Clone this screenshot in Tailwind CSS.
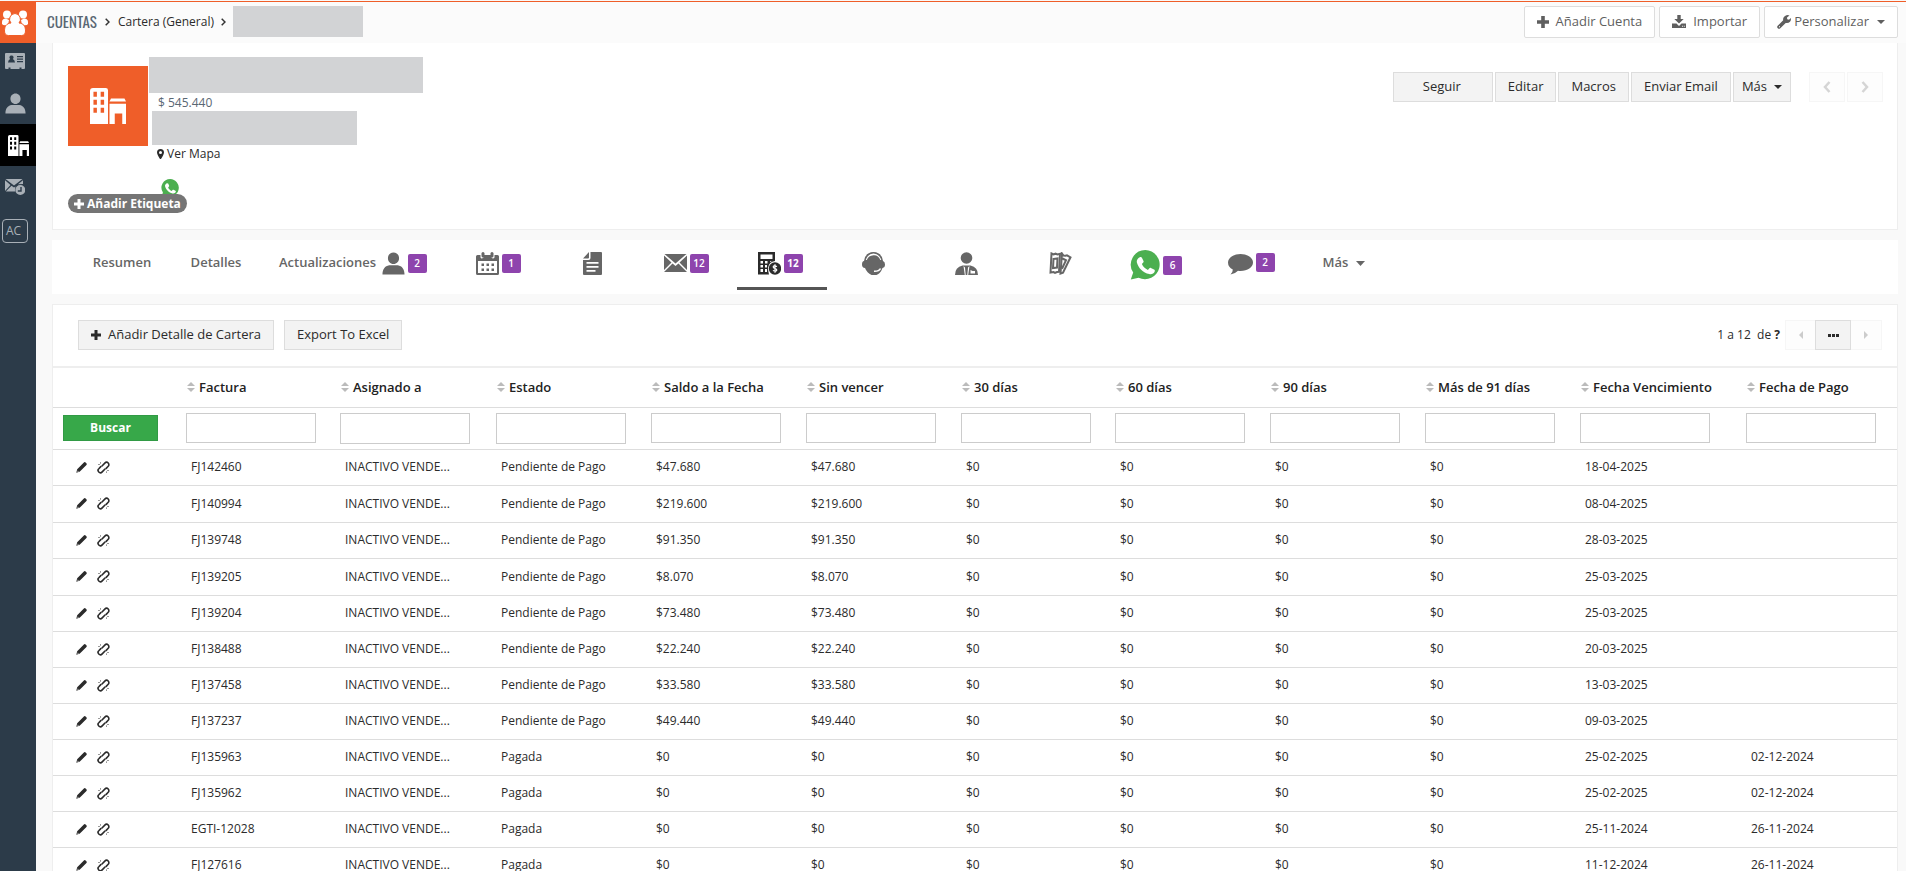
<!DOCTYPE html>
<html lang="es">
<head>
<meta charset="utf-8">
<title>Cuentas - Cartera</title>
<script src="https://cdn.jsdelivr.net/npm/@tailwindcss/browser@4"></script>
</head>
<body class="bg-[#f9f9f9] font-['Open_Sans',sans-serif] text-[13px] text-[#2b2b2b] h-screen overflow-hidden flex flex-col">

<svg class="hidden" aria-hidden="true">
  <symbol id="i-user" viewBox="0 0 24 24"><path d="M12 0.5c3.400 0 5.800 2.600 5.800 6s-2.400 6-5.800 6-5.800-2.600-5.800-6 2.400-6 5.800-6zM0.500 23.500c0-5.500 2.500-9 7-9.700h9c4.500.7 7 4.200 7 9.700z"/></symbol>
  <symbol id="i-building" viewBox="0 0 24 24"><path fill-rule="evenodd" d="M2 0h8.500q1.500 0 1.500 1.500V24H0V2q0-2 2-2zM2.300 2.500v3.300h2.300V2.500zm4.800 0v3.300h2.300V2.500zM2.300 7.800v3.300h2.300V7.800zm4.800 0v3.300h2.300V7.800zM2.300 13.200v3.300h2.300v-3.300zm4.800 0v3.300h2.300v-3.300zM14 7h9l1 2H13zM13 10.500h11V24h-2.500v-7h-5v7H13z"/></symbol>
  <symbol id="i-whatsapp" viewBox="0 0 30 30"><path fill="#4caf50" d="M15.300 0a14.600 14.600 0 1 1-6.700 27.700L.8 29.600l2.400-7A14.600 14.600 0 0 1 15.300 0z"/><path fill="#fff" d="M9.800 7.200c.8-.6 1.700-.3 2.100.5l1.600 3.300c.3.600.1 1.200-.3 1.600l-1.300 1.400c1.200 2.700 3.200 4.700 6 5.900l1.300-1.500c.5-.6 1.100-.7 1.700-.4l3.100 1.500c.8.4 1 1.100.7 1.900-.9 2.200-3.100 3.200-5.500 2.600C13 22.700 8.200 17.900 6.800 12.200c-.5-2 1.300-4.200 3-5z"/></symbol>
  <symbol id="i-plus" viewBox="0 0 12 12"><path d="M4.200 0h3.600v4.200H12v3.600H7.800V12H4.200V7.800H0V4.200h4.200z"/></symbol>
  <symbol id="i-caret" viewBox="0 0 8 4"><path d="M0 0h8L4 4z"/></symbol>
  <symbol id="i-sort" viewBox="0 0 8 10"><path d="M4 0l4 4H0zM0 6h8l-4 4z"/></symbol>
  <symbol id="i-pencil" viewBox="0 0 12 12"><path d="M8.600.5q1-.8 1.900 0l.8.8q.9.9.1 1.900l-5.200 5.300-2.300 2L.3 11.600l1-3.700zM2 9.200l-.4 1.200.4.3 1.100-.4z" fill-rule="evenodd"/></symbol>
  <symbol id="i-unlink" viewBox="0 0 13 13"><g fill="none" stroke="currentColor" stroke-width="1.600" stroke-linecap="round"><path d="M5 5l2.800-2.900c1-1 2.500-1 3.400-.1s.9 2.400 0 3.300L9.200 7.400"/><path d="M8 8l-2.800 2.900c-1 1-2.500 1-3.400.1s-.9-2.400 0-3.300l2-2.100"/></g><path fill="none" stroke="#999" stroke-width="1" d="M1 3.500h2M3.500 1v1.800M10 9.500h2M9.500 10.300v1.700"/></symbol>
</svg>

<div class="h-px shrink-0"></div>
<div class="h-px shrink-0 bg-[#ef5e29]"></div>

<div class="flex flex-1 min-h-0">
  <nav class="w-9 shrink-0 bg-[#2c3b49] text-[#a9b0b7]" aria-label="Módulos">
    <a href="#" aria-label="Inicio" class="flex h-[41px] items-center justify-center bg-[#ef5e29] pr-1.5 text-white">
      <svg class="size-[26px] fill-current" viewBox="0 0 26 26"><circle cx="5" cy="4.500" r="4"/><circle cx="21" cy="4.500" r="4"/><path d="M0 14V12q0-3.500 4-3.500l3 1.500-1 5q-5 1-6-1zM26 14V12q0-3.500-4-3.500L19 10l1 5q5 1 6-1z"/><path stroke="#ef5e29" stroke-width="1" d="M13 3.500a5.700 5.700 0 0 1 4 9.500c4.500.5 6.500 3 6.500 8 0 3-1.500 4.500-4 4.500H6.500c-2.500 0-4-1.500-4-4.500 0-5 2-7.500 6.500-8a5.700 5.700 0 0 1 4-9.500z"/></svg>
    </a>
    <a href="#" aria-label="Contactos" class="flex h-[36px] items-center justify-center pr-1.5">
      <svg class="h-[17px] w-5 fill-current" viewBox="0 0 20 17"><path fill-rule="evenodd" d="M1 0h18q1 0 1 1v14q0 1-1 1h-2.500v-1.500h-2V16h-9v-1.500h-2V16H1q-1 0-1-1V1q0-1 1-1zM6.500 2.500a2 2 0 0 0-1.300 3.600Q3.300 6.700 3 9.500h7Q9.700 6.700 7.800 6.100A2 2 0 0 0 6.500 2.500zM12 3v1.200h6V3zm0 2.500v1.200h6V5.500zM12 8v1.200h6V8z"/></svg>
    </a>
    <a href="#" aria-label="Usuarios" class="flex h-[45px] items-center justify-center pr-1.5 pt-1"><svg class="size-[21px] fill-current"><use href="#i-user"/></svg></a>
    <a href="#" aria-label="Cuentas" class="flex h-[42px] items-center justify-center bg-black text-white"><svg class="size-[21px] fill-current"><use href="#i-building"/></svg></a>
    <a href="#" aria-label="Correos programados" class="flex h-[42px] items-center justify-center pr-1.5">
      <svg class="h-4 w-5 fill-current" viewBox="0 0 20 16"><path d="M.5 0h17L9 6.500zM0 1.200L5.500 6 0 12zM18 1.200V5q-3 0-5 .2zM6.500 6.800L9 8.500l1.500-1Q9.700 10 10 12.500H.8z"/><path fill-rule="evenodd" d="M15.300 6a5 5 0 1 1 0 10 5 5 0 0 1 0-10zm0 2v3.300h-2.500v1.400h3.900V8z"/></svg>
    </a>
    <a href="#" class="mt-[11px] ml-0.5 flex h-6 w-[26px] items-center rounded border border-[#a9b0b7] pl-[3px] text-xs">AC</a>
  </nav>

  <main class="flex min-w-0 flex-1 flex-col">
    <header class="flex h-[41px] shrink-0 items-center bg-[#fbfbfb] pb-0.5 pl-[11px] pr-2">
      <h1 class="font-['Oswald','Liberation_Sans_Narrow',sans-serif] text-[15px] text-[#5a6773]">CUENTAS</h1>
      <svg class="mx-2 h-2 w-[5px]" viewBox="0 0 5 8" fill="none" stroke="#333" stroke-width="1.500"><path d="M.7.7L4 4 .7 7.300"/></svg>
      <a href="#" class="text-xs">Cartera (General)</a>
      <svg class="mx-[7px] h-2 w-[5px]" viewBox="0 0 5 8" fill="none" stroke="#333" stroke-width="1.500"><path d="M.7.7L4 4 .7 7.300"/></svg>
      <div class="h-[31px] w-[130px] bg-[#d2d3d5]"></div>
      <div class="ml-auto flex gap-1 text-[#5f5f5f]">
        <button class="flex h-8 items-center gap-[7px] rounded-xs border border-[#ddd] bg-white px-3"><svg class="size-3 fill-current"><use href="#i-plus"/></svg>Añadir Cuenta</button>
        <button class="flex h-8 items-center gap-[7px] rounded-xs border border-[#ddd] bg-white px-3"><svg class="h-[13px] w-[14px] fill-current" viewBox="0 0 14 13"><path fill-rule="evenodd" d="M5.300 0h3.400v4h3L7 8.600 2.300 4h3zM0 8.500h4.500L7 11l2.500-2.500H14V13H0zm10 2.300v.9h.9v-.9zm1.800 0v.9h.9v-.9z"/></svg>Importar</button>
        <button class="flex h-8 items-center gap-[3px] rounded-xs border border-[#ddd] bg-white px-3"><svg class="size-[14px] fill-current" viewBox="0 0 14 14"><path fill-rule="evenodd" d="M9.500.2q1.500-.4 3 .4L10 2.500l.2 1.700 1.800.6L13.900 3q.4 2-.9 3.700-1.800 1.900-4.300 1.200L3.300 13.300Q2 14.400.8 13.200T.7 10.700L6.200 5.300Q5.500 1.800 9.500.2zM2 11.300v1h1v-1z"/></svg>Personalizar<svg class="ml-[5px] h-1 w-2 fill-current"><use href="#i-caret"/></svg></button>
      </div>
    </header>

    <section class="mr-2 ml-4 flex h-[187px] shrink-0 border border-t-0 border-[#eee] bg-white">
      <div class="relative pl-[15px] pt-[14px]">
        <div class="flex">
          <div class="mt-[9px] flex size-20 items-center justify-center bg-[#ef5e29]"><svg class="size-9 fill-white"><use href="#i-building"/></svg></div>
          <div class="pl-px">
            <div class="h-9 w-[274px] bg-[#d2d3d5]"></div>
            <p class="pl-[9px] pt-0.5 text-xs leading-4 text-[#5a6773]">$ 545.440</p>
            <div class="ml-[3px] h-[34px] w-[205px] bg-[#d2d3d5]"></div>
            <a href="#" class="flex items-center gap-[3px] pl-2 text-xs leading-[18px]"><svg class="h-2.5 w-[7px] fill-current" viewBox="0 0 7 10"><path fill-rule="evenodd" d="M3.500 0Q7 .2 7 3.500 6.800 5.500 4 10H3Q.2 5.500 0 3.500 0 .2 3.500 0zm0 2a1.500 1.500 0 1 0 0 3 1.500 1.500 0 0 0 0-3z"/></svg>Ver Mapa</a>
            <svg class="ml-3 mt-4 size-[18px]" viewBox="0 0 30 30"><use href="#i-whatsapp"/></svg>
          </div>
        </div>
        <button class="absolute left-[15px] top-[151px] flex h-[19px] items-center gap-[3px] rounded-full bg-[#757575] px-1.5 text-xs font-bold text-white"><svg class="size-[10px] fill-current"><use href="#i-plus"/></svg>Añadir Etiqueta</button>
      </div>
      <div class="ml-auto mr-[14px] mt-[29px] flex h-[30px] gap-0.5">
        <button class="w-[100px] border border-[#ddd] bg-[#f3f3f3] pr-0.5">Seguir</button>
        <button class="border border-[#ddd] bg-[#f3f3f3] px-3">Editar</button>
        <button class="border border-[#ddd] bg-[#f3f3f3] px-3">Macros</button>
        <button class="border border-[#ddd] bg-[#f3f3f3] px-3">Enviar Email</button>
        <button class="flex items-center gap-[7px] border border-[#ddd] bg-[#f3f3f3] px-2">Más<svg class="h-1 w-2 fill-current"><use href="#i-caret"/></svg></button>
        <button aria-label="Anterior" class="ml-4 flex w-9 items-center justify-center border border-[#f6f6f6] bg-[#fdfdfd]"><svg class="h-3 w-2" viewBox="0 0 8 12" fill="none" stroke="#d5d5d5" stroke-width="2.500"><path d="M6.500 1L2 6l4.500 5"/></svg></button>
        <button aria-label="Siguiente" class="flex w-9 items-center justify-center border border-[#f6f6f6] bg-[#fdfdfd]"><svg class="h-3 w-2" viewBox="0 0 8 12" fill="none" stroke="#d5d5d5" stroke-width="2.500"><path d="M1.500 1L6 6l-4.500 5"/></svg></button>
      </div>
    </section>

    <nav class="mr-2 ml-4 mt-2.5 flex h-[54px] shrink-0 bg-white pl-[23px] font-semibold text-[#666]" aria-label="Relacionados">
      <a href="#" class="flex h-[46px] w-[94px] shrink-0 items-center justify-center">Resumen</a>
      <a href="#" class="flex h-[46px] w-[94px] shrink-0 items-center justify-center">Detalles</a>
      <a href="#" class="flex h-[46px] w-[94px] shrink-0 items-center whitespace-nowrap pl-4">Actualizaciones</a>
      <a href="#" aria-label="Contactos" class="flex h-[46px] w-[94px] shrink-0 items-center justify-center gap-[3px]"><svg class="size-[23px] fill-current"><use href="#i-user"/></svg><span class="w-[19px] rounded-xs bg-[#8e44ad] text-center text-[10px] leading-[19px] text-white">2</span></a>
      <a href="#" aria-label="Actividades" class="flex h-[46px] w-[94px] shrink-0 items-center justify-center gap-[3px]"><svg class="size-[23px] fill-current" viewBox="0 0 23 23"><path fill-rule="evenodd" d="M1.500 3h3v2.500q1 2 3 0V3h8v2.500q1.500 2 3 0V3h3Q23 3 23 4.500v17q0 1.500-1.500 1.500h-20Q0 23 0 21.500v-17Q0 3 1.500 3zM2 9v12h19V9z"/><rect x="5.500" width="3" height="5.500" rx="1.500"/><rect x="14.500" width="3" height="5.500" rx="1.500"/><path d="M5.500 11.500H8V14H5.500zm5 0H13V14h-2.500zm5 0H18V14h-2.500zM5.500 16.500H8V19H5.500zm5 0H13V19h-2.500zm5 0H18V19h-2.500z"/></svg><span class="w-[19px] rounded-xs bg-[#8e44ad] text-center text-[10px] leading-[19px] text-white">1</span></a>
      <a href="#" aria-label="Documentos" class="flex h-[46px] w-[94px] shrink-0 items-center justify-center"><svg class="h-[23px] w-[19px] fill-current" viewBox="0 0 19 23"><path fill-rule="evenodd" d="M7.500 0H18q1 0 1 1v21q0 1-1 1H1q-1 0-1-1V8h5.500q2 0 2-2zM3.500 10v1.700h12V10zm0 4v1.700h12V14zm0 4v1.700h9V18z"/><path d="M6 0v5.500q0 1-1 1H0z"/></svg></a>
      <a href="#" aria-label="Correos" class="flex h-[46px] w-[94px] shrink-0 items-center justify-center gap-[3px]"><svg class="h-[18px] w-[23px] fill-current" viewBox="0 0 23 18"><path d="M.5 0h22l-11 9.500zM0 1.500L7.500 8.500 0 16zM23 1.500L15.500 8.500 23 16zM8.500 9.500l3 2.500 3-2.500 8.500 8.500H0z"/></svg><span class="w-[19px] rounded-xs bg-[#8e44ad] text-center text-[10px] leading-[19px] text-white">12</span></a>
      <a href="#" aria-label="Cartera" class="ml-1 flex h-[50px] w-[90px] shrink-0 items-center justify-center gap-[3px] border-b-[3px] border-[#555] pb-px pr-1 text-[#2b2b2b]"><svg class="size-[23px] fill-current" viewBox="0 0 23 23"><path fill-rule="evenodd" d="M0 0h17v9q-6 .5-7 7 0 3 1 6.500H0zM2.500 2.500V7h12V2.500zM2.500 9v2.500H5V9zm4.500 0v2.500h2.500V9zm5 0v1l2-1zM2.500 13v2.500H5V13zM7 13v2.500h2V13zM2.500 17v3H5v-3zM7 17v3h2v-3z"/><circle cx="17" cy="16.500" r="6.200"/><path fill="none" stroke="#fff" stroke-width="1.200" d="M19 14.500q-3.800-1.500-3.800.5 0 1 1.800 1.500t1.800 1.600q0 1.800-3.900.4M17 12.300v8.500"/></svg><span class="w-[19px] rounded-xs bg-[#8e44ad] text-center text-[10px] font-bold leading-[19px] text-white">12</span></a>
      <a href="#" aria-label="Casos" class="flex h-[46px] w-[92px] shrink-0 items-center justify-center"><svg class="size-[23px] fill-current" viewBox="0 0 23 23"><path fill-rule="evenodd" d="M11.500 0Q20 .5 21 9q2 .5 2 3.500T20.500 16q-2 5.500-6 7h-5Q5 21 3 16q-3-.3-3-3.500T2 9Q3 .5 11.500 0zm0 1.500Q5.500 2 3.800 8h1Q6.500 3.500 11.500 3.200T18.300 8h1Q17.500 2 11.500 1.500z"/><path fill="none" stroke="#fff" stroke-width="1.600" d="M18.500 16.500q-1.500 3-6.500 2.800"/></svg></a>
      <a href="#" aria-label="Vendedores" class="flex h-[46px] w-[94px] shrink-0 items-center justify-center"><svg class="size-[23px] fill-current" viewBox="0 0 23 23"><circle cx="11.500" cy="6" r="5.800"/><path fill-rule="evenodd" d="M7.500 13.500h8q7.500 1.500 7.500 9.500H0q0-8 7.500-9.500zM8.500 14l1.300 9h.9l-.7-7.500zm6 0l-1.500 1.500-.7 7.500h.9zM15.500 18v3.500h4.500V19h-2.500z"/></svg></a>
      <a href="#" aria-label="Tickets" class="flex h-[46px] w-[94px] shrink-0 items-center justify-center"><svg class="size-[23px]" viewBox="0 0 23 23" fill="none" stroke="currentColor" stroke-width="2"><path d="M2.500 1.500l2 1 2-.8 2 .8 2.500-.7-1 18-2 .2-2 .9-1.500-.8-3 .4z"/><path d="M4.500 7l4-.5-.5 9-4 .5z"/><path d="M13 1.500l1.500 2 2 .3 1.500-.5 3.500 2-7.500 15.500-2.500.8zM13.500 6.500l3.500 1.800-4 8.500"/></svg></a>
      <a href="#" aria-label="WhatsApp" class="flex h-[50px] w-[98px] shrink-0 items-center justify-center gap-[3px]"><svg class="size-[30px]"><use href="#i-whatsapp"/></svg><span class="w-[19px] rounded-xs bg-[#8e44ad] text-center text-[10px] leading-[19px] text-white">6</span></a>
      <a href="#" aria-label="Comentarios" class="flex h-[45px] w-[92px] shrink-0 items-center justify-center gap-[3px]"><svg class="mt-[3px] h-[21px] w-[25px] fill-current" viewBox="0 0 25 21"><path d="M12.500 0C19.500 0 25 3.800 25 8.500S19.500 17 12.500 17q-1.500 0-2.500-.2-3 3.200-7.500 3.700 2.500-2.500 2.300-5Q0 13 0 8.500C0 3.800 5.500 0 12.500 0z"/></svg><span class="w-[19px] rounded-xs bg-[#8e44ad] text-center text-[10px] leading-[19px] text-white">2</span></a>
      <a href="#" class="flex h-[46px] w-[94px] shrink-0 items-center justify-center gap-2">Más<svg class="h-[5px] w-[9px] fill-current" viewBox="0 0 9 5"><path d="M0 0h9L4.500 5z"/></svg></a>
    </nav>

    <section class="mr-2 ml-4 mt-2.5 flex-1 overflow-hidden border border-b-0 border-[#eee] bg-white">
      <div class="flex items-center gap-2.5 pt-[15px] pb-4 pl-[25px] pr-[15px]">
        <button class="flex h-[30px] items-center gap-[7px] border border-[#ddd] bg-[#f3f3f3] px-3"><svg class="size-[10px] fill-current"><use href="#i-plus"/></svg>Añadir Detalle de Cartera</button>
        <button class="h-[30px] border border-[#ddd] bg-[#f3f3f3] px-3">Export To Excel</button>
        <div class="ml-auto flex h-[30px]">
          <span class="self-center pr-[5px] text-xs">1 a 12 &nbsp;de <b>?</b></span>
          <button aria-label="Página anterior" class="flex w-[30px] items-center justify-center border border-r-0 border-[#f6f6f6] bg-[#fdfdfd]"><svg class="h-2 w-1 fill-[#ccc]" viewBox="0 0 4 8"><path d="M4 0v8L0 4z"/></svg></button>
          <button aria-label="Ir a página" class="flex w-9 items-center justify-center border border-[#ddd] bg-[#f3f3f3]"><svg class="h-[3px] w-[11px] fill-current" viewBox="0 0 11 3"><path d="M0 0h3v3H0zM4 0h3v3H4zM8 0h3v3H8z"/></svg></button>
          <button aria-label="Página siguiente" class="flex w-[31px] items-center justify-center border border-l-0 border-[#f6f6f6] bg-[#fdfdfd]"><svg class="h-2 w-1 fill-[#ccc]" viewBox="0 0 4 8"><path d="M0 0v8l4-4z"/></svg></button>
        </div>
      </div>
      <table class="w-full table-fixed border-t-2 border-[#eee]">
        <colgroup><col class="w-[129px]"><col class="w-[154px]"><col class="w-[156px]"><col class="w-[155px]"><col class="w-[155px]"><col class="w-[155px]"><col class="w-[154px]"><col class="w-[155px]"><col class="w-[155px]"><col class="w-[155px]"><col class="w-[166px]"><col class="w-[155px]"></colgroup>
        <thead>
          <tr id="titles" class="h-10 border-b border-[#ddd]"><td></td></tr>
          <tr id="filters" class="h-[42px] border-b border-[#ddd]"><td class="pl-2.5"><button class="h-[26px] w-[95px] border border-[#319a45] bg-[#37a849] text-xs font-bold text-white">Buscar</button></td></tr>
        </thead>
        <tbody id="rows"></tbody>
      </table>
    </section>
  </main>
</div>

<script>
const titles = ['Factura','Asignado a','Estado','Saldo a la Fecha','Sin vencer','30 días','60 días','90 días','Más de 91 días','Fecha Vencimiento','Fecha de Pago'];
const P = 'Pendiente de Pago', G = 'Pagada';
const data = [
  ['FJ142460',P,'$47.680','18-04-2025',''],
  ['FJ140994',P,'$219.600','08-04-2025',''],
  ['FJ139748',P,'$91.350','28-03-2025',''],
  ['FJ139205',P,'$8.070','25-03-2025',''],
  ['FJ139204',P,'$73.480','25-03-2025',''],
  ['FJ138488',P,'$22.240','20-03-2025',''],
  ['FJ137458',P,'$33.580','13-03-2025',''],
  ['FJ137237',P,'$49.440','09-03-2025',''],
  ['FJ135963',G,'$0','25-02-2025','02-12-2024'],
  ['FJ135962',G,'$0','25-02-2025','02-12-2024'],
  ['EGTI-12028',G,'$0','25-11-2024','26-11-2024'],
  ['FJ127616',G,'$0','11-12-2024','26-11-2024'],
];
document.getElementById('titles').insertAdjacentHTML('beforeend', titles.map(t =>
  `<th scope="col" class="whitespace-nowrap pl-[5px] text-left font-semibold text-[#222]"><svg class="mr-1 inline-block h-2.5 w-2 fill-[#bbb] align-baseline"><use href="#i-sort"/></svg>${t}</th>`).join(''));
document.getElementById('filters').insertAdjacentHTML('beforeend', titles.map((t, i) =>
  `<td class="pl-1"><input type="text" aria-label="${t}" class="block w-[130px] border border-[#ccc] bg-white px-1.5 ${i === 1 || i === 2 ? 'h-[31px]' : 'h-[30px]'}"></td>`).join(''));
document.getElementById('rows').innerHTML = data.map(([f, s, m, v, p], i) =>
  `<tr class="border-b border-[#ddd] ${i === 1 || i === 3 ? 'h-[37px]' : 'h-9'}"><td class="pl-[23px]"><div class="flex items-center gap-2.5"><a href="#" aria-label="Editar ${f}"><svg class="size-[11px] fill-current"><use href="#i-pencil"/></svg></a><a href="#" aria-label="Desvincular ${f}"><svg class="size-[13px]"><use href="#i-unlink"/></svg></a></div></td>` +
  [f, 'INACTIVO VENDE...', s, m, m, '$0', '$0', '$0', '$0', v, p].map(c => `<td class="whitespace-nowrap pl-[9px] text-xs">${c}</td>`).join('') + '</tr>').join('');
</script>
</body>
</html>
